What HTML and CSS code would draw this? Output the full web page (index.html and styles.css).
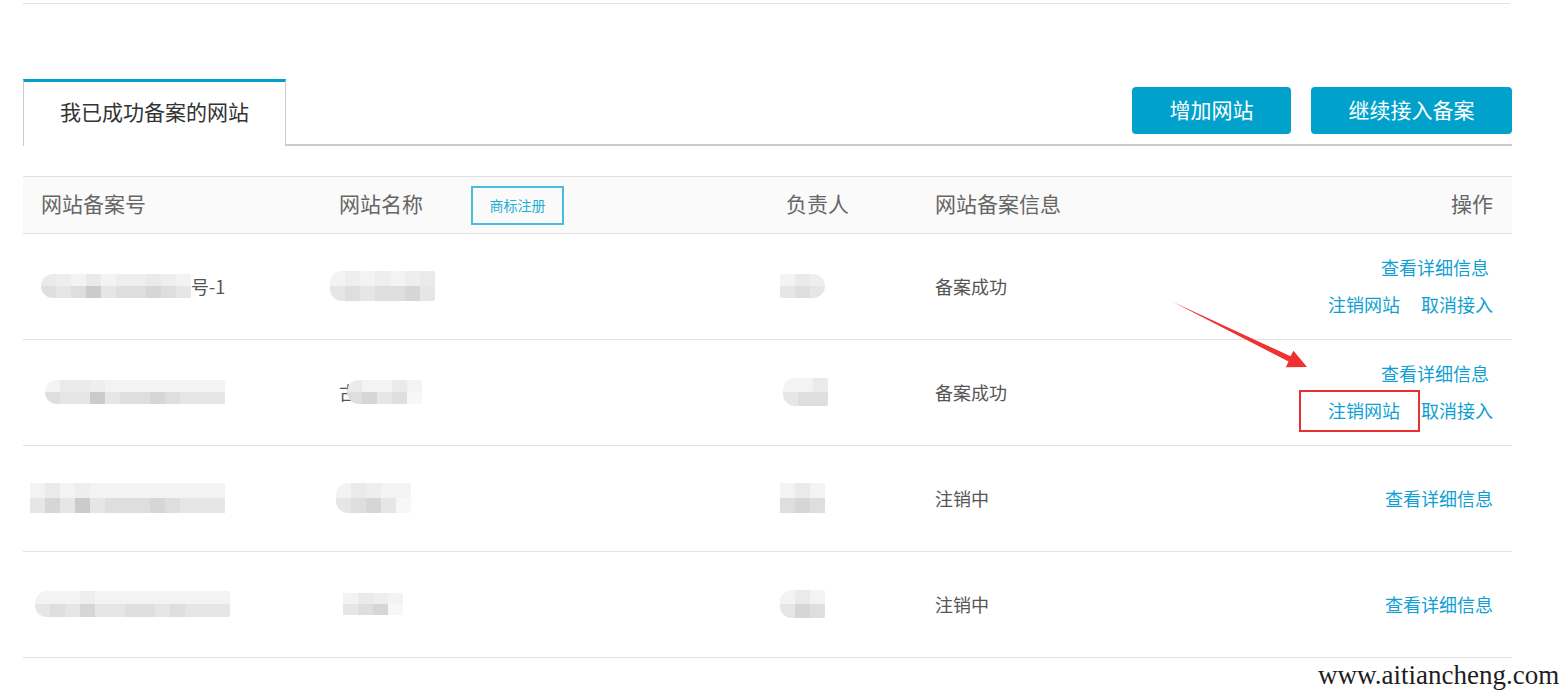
FILE: index.html
```html
<html>
<head>
<meta charset="UTF-8">
<meta name="viewport" content="width=device-width, initial-scale=1.0">
<link rel="stylesheet" href="styles.css">
</head>
<body>
<div class="page">
    <div class="topline"></div>

    <div class="tabbar">
        <div class="tab">我已成功备案的网站</div>
        <div class="actions">
            <button class="btn btn-add">增加网站</button>
            <button class="btn btn-go">继续接入备案</button>
        </div>
    </div>

    <div class="table">
        <div class="thead">
            <div class="cell">网站备案号</div>
            <div class="cell cell-name">网站名称 <span class="tm">商标注册</span></div>
            <div class="cell">负责人</div>
            <div class="cell">网站备案信息</div>
            <div class="cell cell-op">操作</div>
        </div>

        <!-- row 1 -->
        <div class="row">
            <div class="cell">
                <span class="mos mos-round h12"><i class="t1"></i><i class="b1"></i><i class="t2"></i><i class="b4"></i><i class="t3"></i><i class="b1"></i><i class="t1"></i><i class="b3"></i><i class="t3"></i><i class="b4"></i><i class="t2"></i><i class="b1"></i><i class="t2"></i><i class="b1"></i><i class="t1"></i><i class="b2"></i><i class="t2"></i><i class="b1"></i><i class="t3"></i><i class="b4"></i></span><span class="tail">号-1</span>
            </div>
            <div class="cell">
                <span class="mos mos-round h15 off-9"><i class="t3"></i><i class="b4"></i><i class="t2"></i><i class="b1"></i><i class="t3"></i><i class="b4"></i><i class="t2"></i><i class="b1"></i><i class="t3"></i><i class="b1"></i><i class="t2"></i><i class="b2"></i><i class="t1"></i><i class="b4"></i></span>
            </div>
            <div class="cell">
                <span class="mos mos-right h12 off-6"><i class="t3"></i><i class="b4"></i><i class="t1"></i><i class="b1"></i><i class="t2"></i><i class="b4"></i></span>
            </div>
            <div class="cell">备案成功</div>
            <div class="cell cell-op">
                <div class="lines">
                    <a class="link first">查看详细信息</a><br>
                    <a class="link">注销网站</a><a class="link gap">取消接入</a>
                </div>
            </div>
        </div>

        <!-- row 2 -->
        <div class="row">
            <div class="cell">
                <span class="mos mos-round h12 off4"><i class="t3"></i><i class="b1"></i><i class="t1"></i><i class="b4"></i><i class="t1"></i><i class="b4"></i><i class="t2"></i><i class="b3"></i><i class="t3"></i><i class="b4"></i><i class="t3"></i><i class="b1"></i><i class="t3"></i><i class="b1"></i><i class="t3"></i><i class="b2"></i><i class="t3"></i><i class="b1"></i><i class="t3"></i><i class="b4"></i><i class="t3"></i><i class="b4"></i><i class="t3"></i><i class="b4"></i></span>
            </div>
            <div class="cell">
                <span class="tail">古</span><span class="mos mos-round h12 cover"><i class="t1"></i><i class="b1"></i><i class="t3"></i><i class="b2"></i><i class="t3"></i><i class="b4"></i><i class="t1"></i><i class="b1"></i><i class="t3"></i><i class="b3f"></i></span>
            </div>
            <div class="cell">
                <span class="mos mos-round h14 off-3"><i class="t3"></i><i class="b4"></i><i class="t3"></i><i class="b1"></i><i class="t1"></i><i class="b1"></i></span>
            </div>
            <div class="cell">备案成功</div>
            <div class="cell cell-op">
                <div class="lines">
                    <a class="link first">查看详细信息</a><br>
                    <a class="link">注销网站</a><a class="link gap">取消接入</a>
                </div>
            </div>
        </div>

        <!-- row 3 -->
        <div class="row">
            <div class="cell">
                <span class="mos h15 off-11"><i class="t3"></i><i class="b4"></i><i class="t1"></i><i class="b2"></i><i class="t3"></i><i class="b4"></i><i class="t2"></i><i class="b3"></i><i class="t3"></i><i class="b4"></i><i class="t3"></i><i class="b1"></i><i class="t3"></i><i class="b1"></i><i class="t3"></i><i class="b1"></i><i class="t3"></i><i class="b2"></i><i class="t3"></i><i class="b1"></i><i class="t3"></i><i class="b4"></i><i class="t3"></i><i class="b4"></i><i class="t3"></i><i class="b4"></i></span>
            </div>
            <div class="cell">
                <span class="mos mos-round h15 off-3"><i class="t3"></i><i class="b4"></i><i class="t1"></i><i class="b1"></i><i class="t2"></i><i class="b2"></i><i class="t3"></i><i class="b4"></i><i class="t3"></i><i class="b3f"></i></span>
            </div>
            <div class="cell">
                <span class="mos h15 off-6"><i class="t3"></i><i class="b1"></i><i class="t1"></i><i class="b2"></i><i class="t3"></i><i class="b1"></i></span>
            </div>
            <div class="cell">注销中</div>
            <div class="cell cell-op"><a class="link">查看详细信息</a></div>
        </div>

        <!-- row 4 -->
        <div class="row">
            <div class="cell">
                <span class="mos mos-round h13 off-6"><i class="t3"></i><i class="b4"></i><i class="t3"></i><i class="b1"></i><i class="t3"></i><i class="b4"></i><i class="t2"></i><i class="b2"></i><i class="t3"></i><i class="b4"></i><i class="t3"></i><i class="b4"></i><i class="t3"></i><i class="b1"></i><i class="t3"></i><i class="b1"></i><i class="t3"></i><i class="b4"></i><i class="t3"></i><i class="b1"></i><i class="t3"></i><i class="b4"></i><i class="t3"></i><i class="b4"></i><i class="t3"></i><i class="b4"></i></span>
            </div>
            <div class="cell">
                <span class="mos h11 off4"><i class="t3"></i><i class="b4"></i><i class="t1"></i><i class="b1"></i><i class="t2"></i><i class="b2"></i><i class="t3"></i><i class="b3f"></i></span>
            </div>
            <div class="cell">
                <span class="mos mos-round h14 off-6"><i class="t3"></i><i class="b4"></i><i class="t1"></i><i class="b2"></i><i class="t3"></i><i class="b1"></i></span>
            </div>
            <div class="cell">注销中</div>
            <div class="cell cell-op"><a class="link">查看详细信息</a></div>
        </div>
    </div>
</div>

<!-- annotations -->
<svg class="arrow" width="1568" height="695" viewBox="0 0 1568 695">
    <polygon points="1173,302 1290.6,356.2 1293.5,350.8 1307,367 1285.8,367.2 1288.6,361.6" fill="#ee3131"/>
</svg>
<div class="redbox"></div>
<div class="watermark">www.aitiancheng.com</div>
</body>
</html>
```

FILE: styles.css
```css
* { margin: 0; padding: 0; box-sizing: border-box; }
body { font-family: "Noto Sans CJK SC", "Liberation Sans", sans-serif; color: #555; background: #fff; position: relative; width: 1568px; height: 695px; overflow: hidden; }

.page { padding: 3px 0 0 23px; width: 1512px; }
.topline { border-top: 1px solid #e3e3e3; margin-right: 2px; }

/* tab bar */
.tabbar { display: flex; align-items: flex-end; margin-top: 75px; height: 67px; border-bottom: 2px solid #cccccc; }
.tab { width: 263px; height: 67px; margin-bottom: -2px; padding-bottom: 5px; background: #fff; border-top: 3px solid #00a2cc; border-left: 1px solid #cccccc; border-right: 1px solid #cccccc; display: flex; align-items: center; justify-content: center; font-size: 21px; color: #333; line-height: 1; }
.actions { margin-left: auto; display: flex; gap: 20px; margin-bottom: 10px; }
.btn { height: 47px; border: 0; border-radius: 4px; background: #00a2cc; color: #fff; font-family: inherit; font-size: 21px; line-height: 1; padding-bottom: 2px; }
.btn-add { width: 159px; }
.btn-go { width: 201px; }

/* table */
.table { margin-top: 30px; }
.thead, .row { display: grid; grid-template-columns: 298px 447px 149px 295px 300px; align-items: center; }
.thead { height: 58px; background: #fafafa; border-top: 1px solid #e2e2e2; border-bottom: 1px solid #e2e2e2; font-size: 21px; color: #666; line-height: 1; }
.thead .cell { padding-bottom: 3px; }
.row { height: 106px; border-bottom: 1px solid #e2e2e2; font-size: 18px; color: #555; line-height: 1; }
.row .cell { padding-bottom: 2px; }
.cell { padding-left: 18px; display: flex; align-items: center; white-space: nowrap; }
.cell-op { justify-content: flex-end; padding-right: 19px; text-align: right; }
.tm { margin-left: 48px; width: 93px; height: 39px; border: 2px solid #45bfdd; color: #22afd6; font-size: 14px; display: inline-flex; align-items: center; justify-content: center; margin-top: 3px; }

.lines { line-height: 37px; }
.link { color: #109fd2; text-decoration: none; cursor: pointer; }
.link.first { margin-right: 4px; }
.link.gap { margin-left: 21px; }

/* blurred mosaic cells */
.mos { display: inline-grid; grid-auto-flow: column; grid-auto-columns: 15px; overflow: hidden; }
.mos-round { border-radius: 12px 2px 2px 12px; }
.mos-right { border-radius: 2px 12px 12px 2px; }
.h11 { grid-template-rows: 11px 11px; }
.h12 { grid-template-rows: 12px 12px; }
.h13 { grid-template-rows: 13px 13px; }
.h14 { grid-template-rows: 14px 14px; }
.h15 { grid-template-rows: 15px 15px; }
.off4 { margin-left: 4px; }
.off-3 { margin-left: -3px; }
.off-6 { margin-left: -6px; }
.off-9 { margin-left: -9px; }
.off-11 { margin-left: -11px; }
.cover { margin-left: -10px; }
.mos i { display: block; }
.t1 { background: #e9eaeb; }
.t2 { background: #eeeeee; }
.t3 { background: #f3f3f3; }
.b1 { background: #dedede; }
.b2 { background: #d6d6d6; }
.b3 { background: #cbcbcb; }
.b3f { background: #f7f7f7; }
.b4 { background: #e6e6e6; }
.tail { font-size: 18px; color: #555; }

/* annotations */
.arrow { position: absolute; left: 0; top: 0; pointer-events: none; }
.redbox { position: absolute; left: 1299px; top: 390px; width: 121px; height: 42px; border: 2px solid #e8302f; }
.watermark { position: absolute; left: 1318px; top: 659px; font-family: "Liberation Serif", serif; font-size: 27px; color: #1e1e24; line-height: 32px; }
```
